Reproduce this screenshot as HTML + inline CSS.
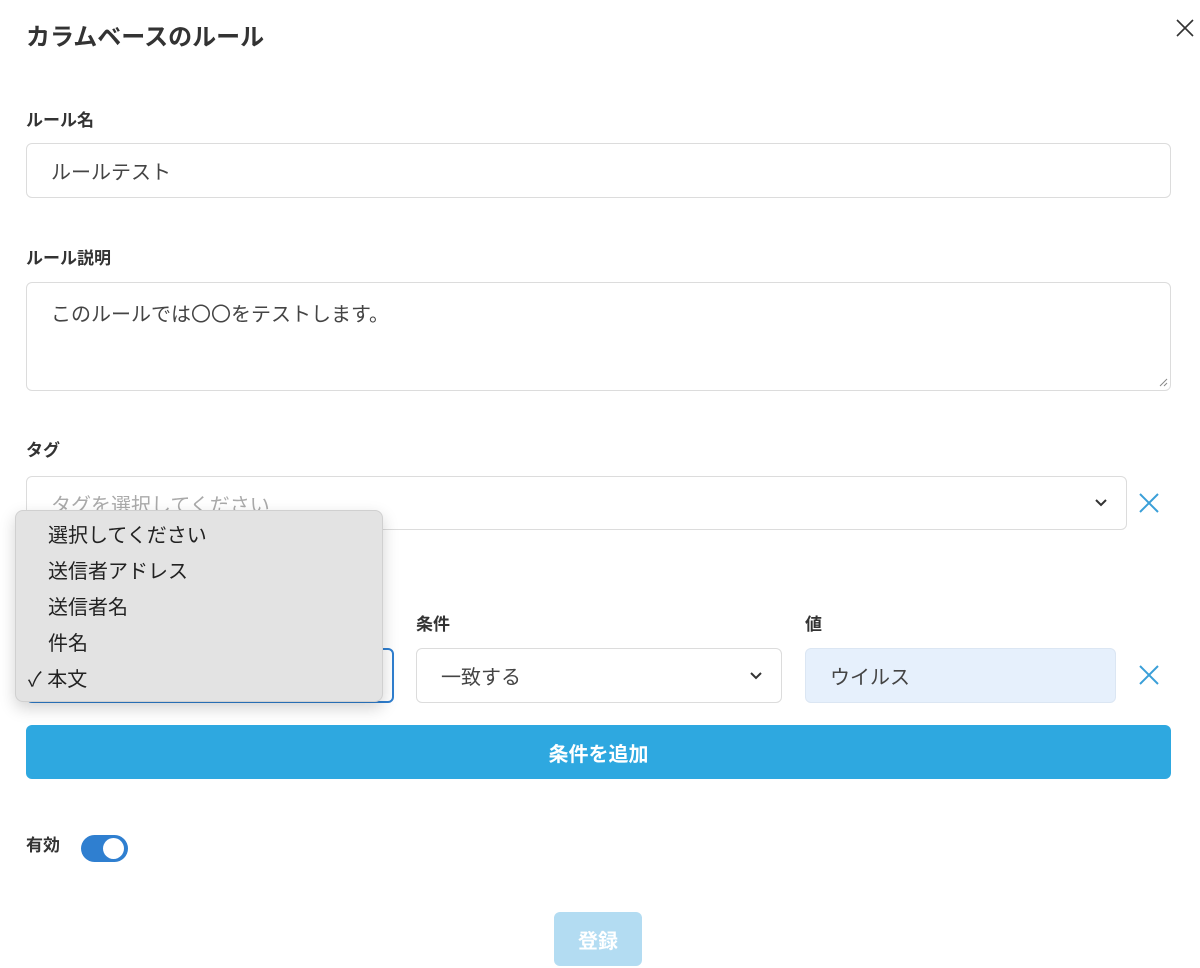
<!DOCTYPE html>
<html><head><meta charset="utf-8"><style>
*{box-sizing:border-box;margin:0;padding:0}
body{width:1200px;height:968px;background:#fff;font-family:"Liberation Sans","Noto Sans CJK JP",sans-serif;color:#333;position:relative;overflow:hidden}
.a{position:absolute}
.lbl{position:absolute;font-size:17px;font-weight:bold;color:#333;line-height:20px}
.box{position:absolute;border:1px solid #dcdcdc;border-radius:6px;background:#fff;font-size:20px;color:#444;padding-left:24px;display:flex;align-items:center}
.chev{position:absolute;right:18px;top:50%;margin-top:-6px}
.it{position:absolute;left:32px;font-size:20px;color:#222;line-height:24px}
</style></head><body>
<div class="a" style="left:26px;top:17px;font-size:24px;font-weight:bold;color:#333">カラムベースのルール</div>
<svg class="a" style="left:1176px;top:19px" width="18" height="18" viewBox="0 0 18 18"><path d="M1 1L17 17M17 1L1 17" stroke="#333" stroke-width="1.6"/></svg>

<div class="lbl" style="left:26px;top:111px">ルール名</div>
<div class="box" style="left:26px;top:143px;width:1145px;height:55px">ルールテスト</div>

<div class="lbl" style="left:26px;top:249px">ルール説明</div>
<div class="box" style="left:26px;top:282px;width:1145px;height:109px;align-items:flex-start;padding-top:15px">このルールでは〇〇をテストします。</div>
<svg class="a" style="left:1158px;top:377px" width="10" height="10"><path d="M9 2L2 9M9 6L6 9" stroke="#888" stroke-width="1"/></svg>

<div class="lbl" style="left:26px;top:441px">タグ</div>
<div class="box" style="left:26px;top:476px;width:1101px;height:54px;color:#aaa">タグを選択してください
<svg class="chev" width="14" height="10" viewBox="0 0 14 10"><path d="M2 3L7 8L12 3" stroke="#333" stroke-width="2" fill="none"/></svg></div>
<svg class="a" style="left:1139px;top:493px" width="20" height="20"><path d="M1 1L19 19M19 1L1 19" stroke="#3a9fd8" stroke-width="2"/></svg>

<div class="lbl" style="left:416px;top:615px">条件</div>
<div class="lbl" style="left:805px;top:615px">値</div>
<div class="box" style="left:26px;top:648px;width:368px;height:55px;border:2px solid #2f7fd0"></div>
<div class="box" style="left:416px;top:648px;width:366px;height:55px">一致する
<svg class="chev" width="14" height="10" viewBox="0 0 14 10"><path d="M2 3L7 8L12 3" stroke="#333" stroke-width="2" fill="none"/></svg></div>
<div class="box" style="left:805px;top:648px;width:311px;height:55px;background:#e6f0fc;border-color:#dbe6f3">ウイルス</div>
<svg class="a" style="left:1139px;top:665px" width="20" height="20"><path d="M1 1L19 19M19 1L1 19" stroke="#3a9fd8" stroke-width="2"/></svg>

<div class="a" style="left:15px;top:510px;width:368px;height:192px;background:#e3e3e3;border:1px solid #d0d0d0;border-radius:8px;box-shadow:0 6px 16px rgba(0,0,0,.18)">
<div class="it" style="top:13px">選択してください</div>
<div class="it" style="top:49px">送信者アドレス</div>
<div class="it" style="top:85px">送信者名</div>
<div class="it" style="top:121px">件名</div>
<div class="it" style="top:157px;left:12px">✓ 本文</div>
</div>

<div class="a" style="left:26px;top:725px;width:1145px;height:54px;background:#2ea8e0;border-radius:6px;color:#fff;font-size:20px;font-weight:bold;display:flex;align-items:center;justify-content:center">条件を追加</div>

<div class="lbl" style="left:26px;top:836px">有効</div>
<div class="a" style="left:81px;top:835px;width:47px;height:27px;background:#2f7fd0;border-radius:14px"><div class="a" style="left:22px;top:3px;width:21px;height:21px;border-radius:50%;background:#fff"></div></div>

<div class="a" style="left:554px;top:912px;width:88px;height:54px;background:#b3dcf2;border-radius:6px;color:#fff;font-size:20px;font-weight:bold;display:flex;align-items:center;justify-content:center">登録</div>
</body></html>
